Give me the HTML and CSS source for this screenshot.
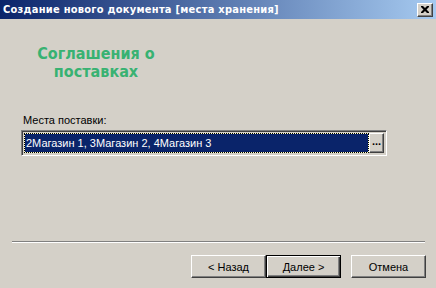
FILE: index.html
```html
<!DOCTYPE html>
<html>
<head>
<meta charset="utf-8">
<link rel="stylesheet" href="styles.css">
</head>
<body>
<div class="window">
  <div class="titlebar">
    <span class="title">Создание нового документа [места хранения]</span>
    <span class="close"><svg width="8" height="7" viewBox="0 0 8 7"><path d="M0 0h2l2 2 2-2h2v1l-2.5 2.5L8 6v1H6L4 5 2 7H0V6l2.5-2.5L0 1z" fill="#000"/></svg></span>
  </div>
  <div class="content">
    <div class="heading">Соглашения о<br>поставках</div>
    <div class="label">Места поставки:</div>
    <div class="field">
      <div class="value"><span class="focus">2Магазин 1, 3Магазин 2, 4Магазин 3</span></div>
      <div class="dots">...</div>
    </div>
  </div>
  <div class="separator"></div>
  <div class="buttons">
    <div class="btn">&lt; Назад</div>
    <div class="btn default">Далее &gt;</div>
    <div class="btn cancel">Отмена</div>
  </div>
</div>
</body>
</html>
```

FILE: styles.css
```css
html, body {
  margin: 0;
  padding: 0;
  background: #d4d0c8;
}
.window {
  width: 436px;
  height: 288px;
  display: flex;
  flex-direction: column;
  font-family: "Liberation Sans", Arial, sans-serif;
  font-size: 11px;
  color: #000;
}
.titlebar {
  height: 19px;
  display: flex;
  align-items: center;
  justify-content: space-between;
  padding: 0 3px 0 3px;
  background: linear-gradient(to right, #0a246a, #a6caf0);
}
.title {
  color: #fff;
  font-family: "DejaVu Sans Condensed", "DejaVu Sans", sans-serif;
  font-weight: bold;
  font-size: 11px;
  letter-spacing: 0.25px;
}
.close {
  width: 16px;
  height: 14px;
  box-sizing: border-box;
  background: #d4d0c8;
  border: 1px solid;
  border-color: #fff #404040 #404040 #fff;
  box-shadow: inset -1px -1px 0 #808080;
  display: flex;
  align-items: center;
  justify-content: center;
}
.content {
  flex: 1;
  display: flex;
  flex-direction: column;
  padding: 26px 50px 0 21px;
}
.heading {
  width: 150px;
  text-align: center;
  color: #38b272;
  font-family: "DejaVu Sans Condensed", "DejaVu Sans", sans-serif;
  font-weight: bold;
  font-size: 16px;
  line-height: 18px;
}
.label {
  margin-top: 33px;
  padding-left: 2px;
  height: 16px;
}
.field {
  display: flex;
  height: 26px;
  box-sizing: border-box;
  border: 1px solid;
  border-color: #808080 #fff #fff #808080;
  box-shadow: inset 1px 1px 0 #404040, inset -1px -1px 0 #d4d0c8;
  padding: 2px;
  width: 366px;
}
.value {
  flex: 1;
  display: flex;
  background: linear-gradient(#0a246a, #0a246a) padding-box, #ffffc8 border-box;
  color: #fff;
  border: 1px dotted #000;
}
.focus {
  padding-left: 1px;
  line-height: 18px;
}
.dots {
  width: 15px;
  box-sizing: border-box;
  border: 1px solid;
  border-color: #fff #404040 #404040 #fff;
  box-shadow: inset -1px -1px 0 #808080;
  background: #d4d0c8;
  text-align: center;
  font-weight: bold;
  line-height: 14px;
}
.separator {
  margin: 0 11px 0 12px;
  border-top: 1px solid #808080;
  border-bottom: 1px solid #fff;
}
.buttons {
  display: flex;
  justify-content: flex-end;
  padding: 12px 10px 10px 0;
}
.btn {
  width: 75px;
  height: 23px;
  box-sizing: border-box;
  border: 1px solid;
  border-color: #fff #404040 #404040 #fff;
  box-shadow: inset -1px -1px 0 #808080;
  display: flex;
  align-items: center;
  justify-content: center;
}
.btn.default {
  border: 1px solid #000;
  box-shadow: inset 1px 1px 0 #fff, inset -1px -1px 0 #404040, inset -2px -2px 0 #808080;
}
.btn.cancel {
  margin-left: 10px;
}
```
